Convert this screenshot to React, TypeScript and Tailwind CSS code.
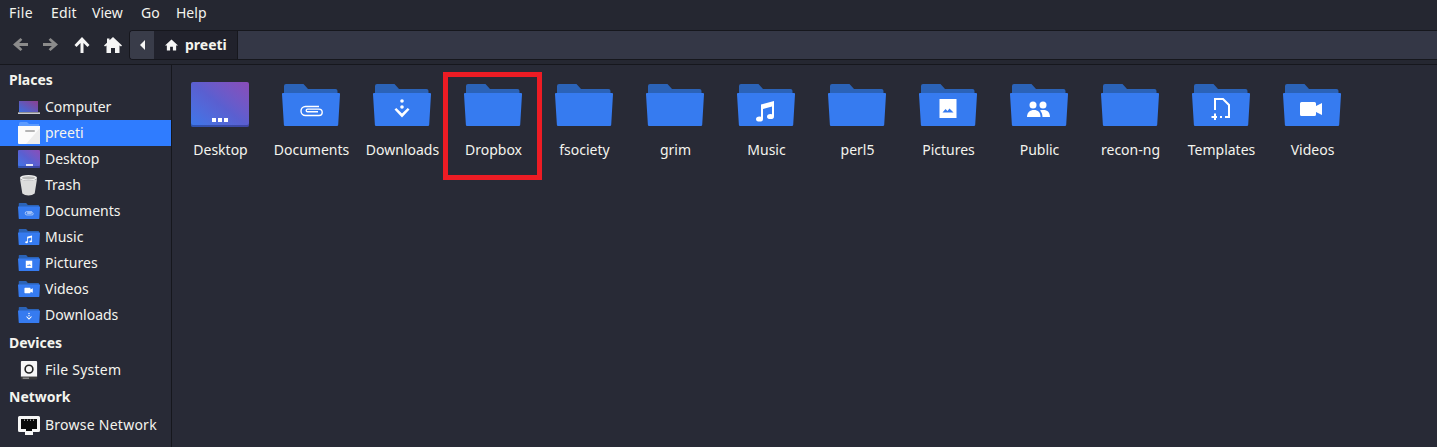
import { ReactNode } from "react";

const FolderShape = ({ children }: { children?: ReactNode }) => (
    <>
        <path d="M2 2Q2 0 4 0H21.5L26 5H53.5Q55.5 5 55.5 7V14H2Z" fill="#2b63b8" />
        <path d="M1 9H57Q58.2 9 58 10.2L56.2 41Q56.1 42 55 42H3Q2 42 1.9 41L0 10.2Q-.2 9 1 9Z" fill="#367bf0" />
        {children}
    </>
);

const glyphs: Record<string, ReactNode> = {
    documents: (
        <path d="M37 22.500H23.500a4.500 4.500 0 0 0 0 9H37a3.200 3.200 0 0 0 0-6.400H25.500a1.300 1.300 0 0 0 0 2.600H36" fill="none" stroke="#fff" strokeWidth="1.400" />
    ),
    downloads: (
        <g fill="#fff">
            <circle cx="29" cy="17" r="1.800" />
            <circle cx="29" cy="23" r="1.800" />
            <path d="M21.500 25.500L23.300 24L29 29.600L34.700 24L36.500 25.500L29 33.500Z" />
        </g>
    ),
    music: (
        <g fill="#fff">
            <path d="M24 20.500L37 17V32H35V22.500L26 25V35H24Z" />
            <ellipse cx="22.500" cy="35" rx="3.500" ry="2.600" />
            <ellipse cx="33.500" cy="32.500" rx="3.500" ry="2.600" />
        </g>
    ),
    pictures: (
        <g>
            <rect x="20.500" y="15" width="17" height="19" fill="#fff" />
            <path d="M23.500 28.500L26.500 25L28.500 27L30.500 24.500L34.500 28.500Z" fill="#367bf0" />
        </g>
    ),
    public: (
        <g fill="#fff">
            <circle cx="23" cy="21" r="3.500" />
            <circle cx="33" cy="21" r="3.500" />
            <path d="M17 33C17 28.500 20 26 24 26S30.500 28.500 30.500 33Z" />
            <path d="M32.500 33C32.500 30 31.500 28 30 26.500C31 26 32 26 33.500 26C37.500 26 40 28.500 40 33Z" />
        </g>
    ),
    templates: (
        <g fill="none" stroke="#fff" strokeWidth="2">
            <path d="M23 26V15H31L37 21V33H33" />
            <path d="M30 33H26.500" strokeDasharray="2 1.500" />
            <path d="M23 29.500V36M19.500 33H25" />
        </g>
    ),
    videos: (
        <path d="M17 19.500Q17 18 18.500 18H31.500Q33 18 33 19.500V22L39 19V31L33 28V30.500Q33 32 31.500 32H18.500Q17 32 17 30.500Z" fill="#fff" />
    ),
    none: null,
};

const Folder = ({ glyph, className }: { glyph: string; className: string }) => (
    <svg viewBox="0 0 58 42" className={className}>
        <FolderShape>{glyphs[glyph]}</FolderShape>
    </svg>
);

const DesktopIcon = ({ className, dots }: { className: string; dots: "big" | "small" }) => (
    <div className={`${className} flex items-end justify-center bg-gradient-to-tr from-[#3a78ea] via-[#5a5fd0] to-[#8a4cb8] shadow-[inset_0_-2px_0_rgba(30,40,110,0.45)]`}>
        {dots === "big" ? (
            <div className="mb-[5px] flex gap-[2px]">
                <div className="size-[4px] bg-white" />
                <div className="size-[4px] bg-white" />
                <div className="size-[4px] bg-white" />
            </div>
        ) : (
            <div className="mb-[2px] h-[2px] w-[7px] bg-[#e6e6f4]" />
        )}
    </div>
);

const SidebarIcon = ({ name }: { name: string }) => {
    if (name === "computer") {
        return (
            <svg viewBox="0 0 22 13" className="h-[13px] w-[22px]">
                <defs>
                    <linearGradient id="laptop" x1="0" y1="1" x2="1" y2="0">
                        <stop offset="0" stopColor="#3a6fe0" />
                        <stop offset="1" stopColor="#8d3f8f" />
                    </linearGradient>
                </defs>
                <rect x="1" y="0" width="19" height="11" fill="url(#laptop)" />
                <rect x="0" y="11.500" width="22" height="1.300" fill="#f4f4f4" />
            </svg>
        );
    }
    if (name === "home") {
        return (
            <svg viewBox="0 0 22 22" className="h-[22px] w-[22px]">
                <path d="M1 1.500Q1 0 2.500 0H9L11 2H21V6H1Z" fill="#5c9bff" />
                <path d="M0 4H22V21Q22 22 21 22H1Q0 22 0 21Z" fill="#fbfbfb" />
                <path d="M22 6V22H8Z" fill="#ececec" />
                <rect x="7" y="8" width="10" height="2" rx="1" fill="#b4b4b4" />
            </svg>
        );
    }
    if (name === "desktop") {
        return <DesktopIcon className="h-[18px] w-[22px] rounded-[1px]" dots="small" />;
    }
    if (name === "trash") {
        return (
            <svg viewBox="0 0 20 22" className="ml-px h-[22px] w-[19px]">
                <ellipse cx="10" cy="3.500" rx="9" ry="3" fill="#f2f2f2" />
                <ellipse cx="10" cy="3.500" rx="7" ry="1.700" fill="#bcbcbc" />
                <path d="M1 4.500C3 7 17 7 19 4.500L16.500 20Q14 22 10 22T3.500 20Z" fill="#dcdcdc" />
            </svg>
        );
    }
    if (name === "disk") {
        return (
            <svg viewBox="0 0 20 22" className="ml-[2px] h-[21px] w-[18px]">
                <path d="M1 1.500Q1 .5 2 .5H18Q19 .5 19 1.500V18H1Z" fill="#f6f6f6" />
                <path d="M1 18H19V20Q19 21 18 21H2Q1 21 1 20Z" fill="#3c3c3c" />
                <rect x="3" y="19" width="7" height="1" fill="#bbb" />
                <circle cx="10" cy="9.500" r="4.300" fill="none" stroke="#222" strokeWidth="1.800" />
            </svg>
        );
    }
    if (name === "network") {
        return (
            <svg viewBox="0 0 22 19" className="h-[19px] w-[22px]">
                <path d="M1.500 0H20.500Q22 0 22 1.500V14.500Q22 16 20.500 16H15V19H7V16H1.500Q0 16 0 14.500V1.500Q0 0 1.500 0Z" fill="#f6f6f6" />
                <path d="M3 3H19V13H14V15H8V13H3Z" fill="#0c0c0c" />
                <path d="M6 3.500h1v1.500H6zM9 3.500h1v1.500H9zM12 3.500h1v1.500h-1zM15 3.500h1v1.500h-1z" fill="#999" />
            </svg>
        );
    }
    return <Folder glyph={name} className="h-[16px] w-[22px]" />;
};

const SidebarRow = ({ icon, label, active, wide }: { icon: string; label: string; active?: boolean; wide?: boolean }) => (
    <div className={`flex h-[26px] items-center pl-[18px] ${active ? "bg-[#2f7cff]" : ""}`}>
        <div className="flex w-[27px] shrink-0 items-center pr-[5px]">
            <SidebarIcon name={icon} />
        </div>
        <span className={`pb-[2px] ${wide ? "tracking-[0.25px]" : ""}`}>{label}</span>
    </div>
);

const Heading = ({ children, className }: { children: ReactNode; className?: string }) => (
    <div className={`flex h-[27px] items-center pb-[2px] pl-[9px] font-bold ${className}`}>{children}</div>
);

const files = [
    { name: "Documents", glyph: "documents" },
    { name: "Downloads", glyph: "downloads" },
    { name: "Dropbox", glyph: "none" },
    { name: "fsociety", glyph: "none" },
    { name: "grim", glyph: "none" },
    { name: "Music", glyph: "music" },
    { name: "perl5", glyph: "none" },
    { name: "Pictures", glyph: "pictures" },
    { name: "Public", glyph: "public" },
    { name: "recon-ng", glyph: "none" },
    { name: "Templates", glyph: "templates" },
    { name: "Videos", glyph: "videos" },
];

const FileItem = ({ name, children, boxed }: { name: string; children: ReactNode; boxed?: boolean }) => (
    <div className="relative flex w-[91px] shrink-0 flex-col items-center">
        {boxed && <div className="absolute left-[-5px] top-[-10px] h-[108px] w-[99px] border-[5px] border-[#ed1c24]" />}
        <div className="flex h-[44px] items-end pr-[2px]">{children}</div>
        <span className="mt-[14px] whitespace-nowrap">{name}</span>
    </div>
);

export default function App() {
    return (
        <div className="flex h-[447px] w-[1437px] flex-col overflow-hidden bg-[#282a36] font-['Noto_Sans',sans-serif] text-[14px] leading-[19px] text-[#f4f4ee]">
            {/* menu */}
            <div className="flex h-[26px] items-center bg-[#252731] pb-[1px] pl-[9px]">
                <span className="w-[42px] tracking-[0.4px]">File</span>
                <span className="w-[41px] tracking-[0.2px]">Edit</span>
                <span className="w-[49px]">View</span>
                <span className="w-[35px]">Go</span>
                <span>Help</span>
            </div>

            {/* toolbar */}
            <div className="flex h-[39px] items-start border-b border-[#16171d] bg-[#252731] pt-[4px]">
                <div className="flex h-[29px] items-center pl-[13px]">
                    <svg viewBox="0 0 16 16" className="size-[15px]" fill="#8b8b8b"><path d="M8 1L10 3L6.500 6.500H16V9.500H6.500L10 13L8 15L0 8Z" /></svg>
                    <svg viewBox="0 0 16 16" className="ml-[15px] size-[15px]" fill="#8b8b8b"><path d="M8 1L6 3L9.500 6.500H0V9.500H9.500L6 13L8 15L16 8Z" /></svg>
                    <svg viewBox="0 0 16 16" className="ml-[16px] size-[16px]" fill="#f6f6f6"><path d="M8 0L15.500 8L13.500 10L9.500 6V16H6.500V6L2.500 10L.5 8Z" /></svg>
                    <svg viewBox="0 0 18 16" className="ml-[14px] h-[16px] w-[18px]" fill="#f6f6f6"><path d="M9 0L18 8.500L17 9.500L15.500 8.500V16H11V11H7V16H2.500V8.500L1 9.500L0 8.500L3 5.700V1.500H5.500V3.300Z" /></svg>
                </div>
                <div className="ml-[7px] flex h-[30px] flex-1 rounded-l-[4px] border border-r-0 border-[#16171d] bg-[#343746]">
                    <div className="flex w-[24px] items-center justify-center rounded-l-[3px] bg-[#393c49]">
                        <svg viewBox="0 0 5 10" className="h-[10px] w-[5px]" fill="#f6f6f6"><path d="M5 0V10L0 5Z" /></svg>
                    </div>
                    <div className="flex w-[84px] items-center border-r border-[#16171d] bg-[#21222c] pb-[1px] pl-[11px] font-bold">
                        <svg viewBox="0 0 14 12" className="mr-[7px] h-[12px] w-[13px]" fill="#f6f6f6"><path d="M7 0L14 6.500H12V12H8.500V8H5.500V12H2V6.500H0Z" /></svg>
                        preeti
                    </div>
                </div>
            </div>

            <div className="flex min-h-0 flex-1">
                {/* sidebar */}
                <div className="w-[172px] shrink-0 border-r border-[#16171d] pt-[2px]">
                    <Heading>Places</Heading>
                    <SidebarRow icon="computer" label="Computer" />
                    <SidebarRow icon="home" label="preeti" active />
                    <SidebarRow icon="desktop" label="Desktop" />
                    <SidebarRow icon="trash" label="Trash" />
                    <SidebarRow icon="documents" label="Documents" />
                    <SidebarRow icon="music" label="Music" />
                    <SidebarRow icon="pictures" label="Pictures" />
                    <SidebarRow icon="videos" label="Videos" />
                    <SidebarRow icon="downloads" label="Downloads" />
                    <Heading className="mt-[2px]">Devices</Heading>
                    <SidebarRow icon="disk" label="File System" wide />
                    <div className="pt-[1px]">
                        <Heading>Network</Heading>
                    </div>
                    <div className="pt-[1px]">
                        <SidebarRow icon="network" label="Browse Network" wide />
                    </div>
                </div>

                {/* files */}
                <div className="flex flex-1 items-start pl-[3px] pt-[17px]">
                    <FileItem name="Desktop">
                        <DesktopIcon className="mb-[-1px] h-[45px] w-[58px] rounded-[2px]" dots="big" />
                    </FileItem>
                    {files.map((file, index) => (
                        <FileItem name={file.name} key={index} boxed={file.name === "Dropbox"}>
                            <Folder glyph={file.glyph} className="h-[42px] w-[58px]" />
                        </FileItem>
                    ))}
                </div>
            </div>
        </div>
    );
}
